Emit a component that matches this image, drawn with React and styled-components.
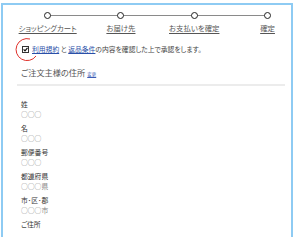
import React from "react";
import styled, { createGlobalStyle } from "styled-components";

const Global = createGlobalStyle`
  html, body { margin: 0; padding: 0; background: #fff; }
  body {
    width: 293px; height: 243px; overflow: hidden;
    font-family: "Noto Sans CJK JP", "Noto Sans", sans-serif;
    font-feature-settings: "palt";
    color: #333;
  }
`;

const Page = styled.div`
  position: relative;
  width: 293px;
  height: 243px;
  padding: 3px 0 0 1px;
  box-sizing: border-box;
`;

const Frame = styled.div`
  box-sizing: border-box;
  width: 292px;
  height: 234px;
  border: 2px solid #8ecbf3;
  border-bottom: none;
  background: #fff;
  padding: 6px 0 0 0;
`;

const Steps = styled.div`
  display: grid;
  grid-template-columns: repeat(4, 73.3px);
  padding-left: 8px;
`;

const Step = styled.div`
  display: flex;
  flex-direction: column;
  align-items: center;
`;

const Track = styled.div`
  position: relative;
  width: 100%;
  height: 8px;
  display: flex;
  justify-content: center;
  align-items: center;
  &::before, &::after {
    content: "";
    position: absolute;
    top: 3.5px;
    height: 1px;
    background: #8a8a8a;
    width: 50%;
  }
  &::before { left: 0; display: ${(p) => (p.$first ? "none" : "block")}; }
  &::after { right: 0; display: ${(p) => (p.$last ? "none" : "block")}; }
`;

const Dot = styled.span`
  position: relative;
  z-index: 1;
  width: 5px;
  height: 5px;
  border: 1.3px solid #222;
  border-radius: 50%;
  background: #fff;
`;

const StepLabel = styled.span`
  margin-top: 4px;
  font-size: 7.4px;
  line-height: 10px;
  color: #555;
  text-decoration: underline;
  text-underline-offset: 1.5px;
  white-space: nowrap;
`;

const Agree = styled.div`
  display: flex;
  align-items: center;
  gap: 3px;
  margin: 11px 0 0 19px;
  font-size: 6.8px;
  line-height: 10px;
  color: #444;
  white-space: nowrap;
`;

const Check = styled.span`
  width: 5px;
  height: 5px;
  border: 1px solid #333;
  display: inline-flex;
  align-items: center;
  justify-content: center;
  background: #fff;
`;

const Link = styled.a`
  color: #2a4fa8;
  text-decoration: underline;
`;

const Plain = styled.span`
  color: #444;
`;

const Section = styled.div`
  margin: 12px 6px 0 14px;
`;

const Heading = styled.div`
  display: flex;
  align-items: baseline;
  gap: 2px;
  padding: 0 0 4px 4px;
  font-size: 8.2px;
  line-height: 12px;
  color: #555;
  border-bottom: 2px solid #ececec;
`;

const Small = styled.a`
  font-size: 4.5px;
  color: #3b5bb5;
  text-decoration: underline;
`;

const Fields = styled.div`
  display: flex;
  flex-direction: column;
  gap: 4px;
  padding: 13px 0 0 4px;
`;

const Field = styled.div`
  display: flex;
  flex-direction: column;
`;

const Label = styled.span`
  font-size: 6.8px;
  line-height: 10px;
  color: #333;
`;

const Value = styled.span`
  font-size: 6.8px;
  line-height: 10px;
  color: #888;
`;

const Mark = styled.svg`
  position: absolute;
  left: 0;
  top: 0;
  pointer-events: none;
`;

const steps = ["ショッピングカート", "お届け先", "お支払いを確定", "確定"];
const fields = [
  ["姓", "○○○"],
  ["名", "○○○"],
  ["郵便番号", "○○○"],
  ["都道府県", "○○○県"],
  ["市･区･郡", "○○○市"],
  ["ご住所", ""],
];

export default function App() {
  return (
    <>
      <Global />
      <Page>
        <Frame>
          <Steps>
            {steps.map((s, i) => (
              <Step key={s}>
                <Track $first={i === 0} $last={i === steps.length - 1}>
                  <Dot />
                </Track>
                <StepLabel>{s}</StepLabel>
              </Step>
            ))}
          </Steps>
          <Agree>
            <Check>
              <svg width="5" height="5" viewBox="0 0 5 5">
                <path d="M0.6 2.4 L2 3.9 L4.5 0.8" stroke="#111" strokeWidth="1.2" fill="none" />
              </svg>
            </Check>
            <span>
              <Link>利用規約</Link>
              <Plain> と </Plain>
              <Link>返品条件</Link>の内容を確認した上で承認をします。
            </span>
          </Agree>
          <Section>
            <Heading>
              ご注文主様の住所<Small>変更</Small>
            </Heading>
            <Fields>
              {fields.map(([l, v]) => (
                <Field key={l}>
                  <Label>{l}</Label>
                  {v && <Value>{v}</Value>}
                </Field>
              ))}
            </Fields>
          </Section>
        </Frame>
        <Mark width="293" height="243">
          <path d="M30 39 A11 11 0 1 0 36 56" stroke="#e0302a" strokeWidth="1" fill="none" />
        </Mark>
      </Page>
    </>
  );
}
